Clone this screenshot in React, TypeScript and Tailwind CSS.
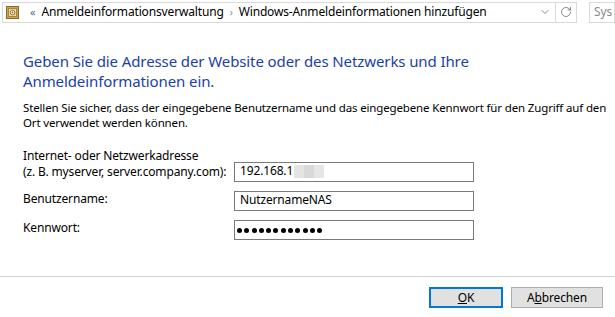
import { ChevronDown, RotateCw } from "lucide-react";

const font = { fontFamily: '"Noto Sans", "Liberation Sans", sans-serif' };

function VaultIcon() {
  return (
    <svg width="13" height="13" viewBox="0 0 13 13">
      <rect x="0.5" y="0.5" width="12" height="12" fill="#c9a452" stroke="#8c6a26" />
      <rect x="2.5" y="2.5" width="8" height="8" fill="#e8d6a4" stroke="#a8843c" />
      <circle cx="6.5" cy="6.5" r="2.3" fill="#f4ead0" stroke="#8c6a26" strokeWidth="0.9" />
      <circle cx="6.5" cy="6.5" r="0.8" fill="#8c6a26" />
    </svg>
  );
}

function Field({ children }: { children: React.ReactNode }) {
  return (
    <div className="w-[240px] h-[20px] border border-[#7a7a7a] bg-white flex items-center pl-[5px] pb-[2px] text-[12px] text-black">
      {children}
    </div>
  );
}

export default function App() {
  return (
    <div
      className="w-[615px] h-[317px] bg-white flex flex-col text-black overflow-hidden tracking-[-0.15px]"
      style={font}
    >
      {/* address bar */}
      <div className="flex items-center h-[23px] pt-[1px]">
        <div className="ml-[2px] w-[575px] h-[21px] border border-[#d9d9d9] flex items-center text-[12px]">
          <div className="ml-[3px]"><VaultIcon /></div>
          <span className="ml-[11px] text-[#6d6d6d] text-[11px]">«</span>
          <span className="ml-[6px]">Anmeldeinformationsverwaltung</span>
          <span className="ml-[6px] text-[#8a8a8a] text-[10px]">›</span>
          <span className="ml-[6px]">Windows-Anmeldeinformationen hinzufügen</span>
          <div className="ml-auto flex items-center h-full">
            <ChevronDown size={12} color="#6d6d6d" strokeWidth={1.6} className="mr-[4px]" />
            <div className="w-px h-full bg-[#d9d9d9]" />
            <RotateCw size={12} color="#6d6d6d" strokeWidth={1.6} className="mx-[4px]" />
          </div>
        </div>
        <div className="ml-[12px] h-[21px] flex-1 border border-[#d9d9d9] flex items-center pl-[4px] text-[12px] text-[#8a8a8a]">
          Sys
        </div>
      </div>

      {/* content */}
      <div className="flex-1 pl-[23px] pt-[28px]">
        <h1 className="text-[15px] leading-[20px] tracking-[-0.1px] text-[#1a3fa8] font-normal">
          Geben Sie die Adresse der Website oder des Netzwerks und Ihre
          <br />
          Anmeldeinformationen ein.
        </h1>
        <p className="mt-[9px] text-[11.5px] leading-[15px] whitespace-nowrap">
          Stellen Sie sicher, dass der eingegebene Benutzername und das eingegebene Kennwort für den Zugriff auf den
          <br />
          Ort verwendet werden können.
        </p>

        <div className="mt-[32px] grid grid-cols-[211px_240px] items-start gap-y-[9px] text-[12px] leading-[15.5px]">
          <div className="-mt-[14px]">
            Internet- oder Netzwerkadresse
            <br />
            (z. B. myserver, server.company.com):
          </div>
          <Field>
            <span>192.168.1</span>
            <span className="flex h-[13px] ml-[1px] mt-[1px]">
              <span className="w-[10px] bg-[#e4e4e4]" />
              <span className="w-[10px] bg-[#d9d9d9]" />
              <span className="w-[10px] bg-[#e6e6e6]" />
            </span>
          </Field>
          <div>Benutzername:</div>
          <Field>NutzernameNAS</Field>
          <div>Kennwort:</div>
          <Field>
            <span className="flex gap-[2.3px] -ml-[3px] mt-[2px]">
              {Array.from({ length: 12 }).map((_, i) => (
                <span key={i} className="w-[5px] h-[5px] rounded-full bg-black" />
              ))}
            </span>
          </Field>
        </div>
      </div>

      {/* footer */}
      <div className="h-[41px] border-t border-[#d4d4d4] flex items-start justify-end pt-[10px] pr-[12px] gap-[8px] text-[12px]">
        <button className="w-[74px] h-[21px] bg-[#e1e1e1] border-2 border-[#0078d7] flex items-center justify-center">
          <span><span className="underline underline-offset-1">O</span>K</span>
        </button>
        <button className="w-[92px] h-[21px] bg-[#e1e1e1] border border-[#adadad] flex items-center justify-center">
          <span>A<span className="underline underline-offset-1">b</span>brechen</span>
        </button>
      </div>
    </div>
  );
}
